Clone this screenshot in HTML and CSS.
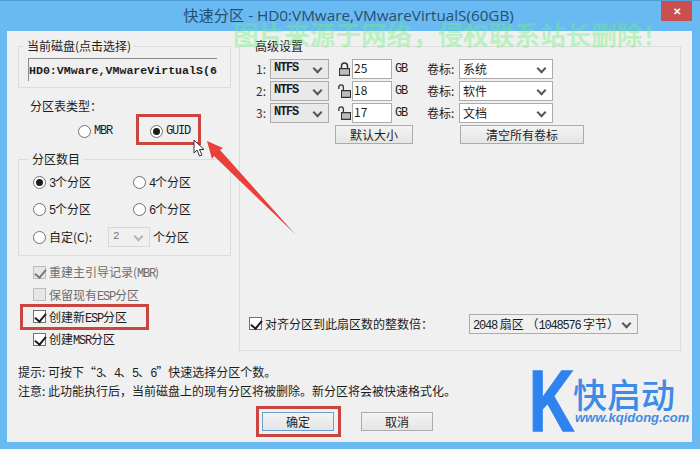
FILE: index.html
```html
<!DOCTYPE html>
<html lang="zh-CN">
<head>
    <meta charset="UTF-8">
    <meta name="viewport" content="width=device-width, initial-scale=1.0">
    <title>快速分区</title>
    <link rel="stylesheet" href="styles.css">
</head>
<body>
    <div class="window">
        <header class="titlebar">
            <h1>快速分区 - HD0:VMware,VMwareVirtualS(60GB)</h1>
            <div class="close">&#x2715;</div>
        </header>

        <main class="client">
            <div class="panels">
                <div class="left">
                    <fieldset class="group disk-group">
                        <legend>当前磁盘(点击选择)</legend>
                        <div class="disk-input">HD0:VMware,VMwareVirtualS(6</div>
                    </fieldset>

                    <p class="type-title">分区表类型：</p>
                    <div class="type-row">
                        <label class="option type-option"><i class="radio"></i><span class="mono">MBR</span></label>
                        <label class="option mark-guid"><i class="radio on"></i><span class="mono">GUID</span></label>
                    </div>

                    <fieldset class="group count-group">
                        <legend>分区数目</legend>
                        <div class="count-grid">
                            <label class="option"><i class="radio on"></i><span><span class="mono">3</span>个分区</span></label>
                            <label class="option"><i class="radio"></i><span><span class="mono">4</span>个分区</span></label>
                            <label class="option"><i class="radio"></i><span><span class="mono">5</span>个分区</span></label>
                            <label class="option"><i class="radio"></i><span><span class="mono">6</span>个分区</span></label>
                        </div>
                        <div class="custom-row">
                            <label class="option custom-option"><i class="radio"></i><span>自定(C):</span></label>
                            <div class="select disabled custom-select">2</div>
                            <span class="custom-unit">个分区</span>
                        </div>
                    </fieldset>

                    <div class="checks">
                        <label class="option muted"><i class="check on"></i><span>重建主引导记录(<span class="mono">MBR</span>)</span></label>
                        <label class="option muted"><i class="check"></i><span>保留现有<span class="mono">ESP</span>分区</span></label>
                        <label class="option mark-esp"><i class="check on"></i><span>创建新<span class="mono">ESP</span>分区</span></label>
                        <label class="option"><i class="check on"></i><span>创建<span class="mono">MSR</span>分区</span></label>
                    </div>
                </div>

                <fieldset class="group advanced">
                    <legend>高级设置</legend>
                    <div class="part-row">
                        <span class="part-num">1:</span>
                        <div class="select fs-select">NTFS</div>
                        <svg class="lock" viewBox="0 0 13 14"><use href="#lock-closed"/></svg>
                        <div class="size-input">25</div>
                        <span class="unit">GB</span>
                        <span class="vol-label">卷标:</span>
                        <div class="select vol-select">系统</div>
                    </div>
                    <div class="part-row">
                        <span class="part-num">2:</span>
                        <div class="select fs-select">NTFS</div>
                        <svg class="lock" viewBox="0 0 13 14"><use href="#lock-open"/></svg>
                        <div class="size-input">18</div>
                        <span class="unit">GB</span>
                        <span class="vol-label">卷标:</span>
                        <div class="select vol-select">软件</div>
                    </div>
                    <div class="part-row">
                        <span class="part-num">3:</span>
                        <div class="select fs-select">NTFS</div>
                        <svg class="lock" viewBox="0 0 13 14"><use href="#lock-open"/></svg>
                        <div class="size-input">17</div>
                        <span class="unit">GB</span>
                        <span class="vol-label">卷标:</span>
                        <div class="select vol-select">文档</div>
                    </div>
                    <div class="part-buttons">
                        <button class="btn default-size">默认大小</button>
                        <button class="btn clear-labels">清空所有卷标</button>
                    </div>
                    <div class="align-row">
                        <label class="option align-option"><i class="check on"></i><span>对齐分区到此扇区数的整数倍：</span></label>
                        <div class="select align-select"><span class="mono">2048</span>&nbsp;扇区&nbsp;（<span class="mono">1048576</span>&nbsp;字节）</div>
                    </div>
                </fieldset>
            </div>

            <div class="hints">
                <p>提示: 可按下“<span class="mono">3</span>、<span class="mono">4</span>、<span class="mono">5</span>、<span class="mono">6</span>”快速选择分区个数。</p>
                <p>注意: 此功能执行后，当前磁盘上的现有分区将被删除。新分区将会被快速格式化。</p>
            </div>

            <div class="actions">
                <button class="btn primary mark-ok">确定</button>
                <button class="btn">取消</button>
            </div>
        </main>

        <div class="watermark">图片来源于网络，侵权联系站长删除！</div>

        <svg class="arrow" viewBox="0 0 100 100">
            <polygon points="2,1 18,8 15,10 90,94 9,16 7,19"/>
        </svg>

        <svg class="cursor" viewBox="0 0 13 18">
            <path d="M1 1 L1 14 L4 11 L6.5 17 L9 16 L6.5 10.5 L11 10.5 Z"/>
        </svg>

        <div class="logo">
            <span class="logo-k">K</span>
            <span class="logo-name">快启动</span>
            <span class="logo-url">www.kqidong.com</span>
        </div>
    </div>

    <svg class="icon-defs" width="0" height="0">
        <symbol id="lock-closed" viewBox="0 0 13 14">
            <path d="M3.5 7V4a3 3 0 0 1 6 0v3" fill="none" stroke="#333" stroke-width="1.5"/>
            <rect x="1.5" y="6.5" width="10" height="7" fill="#9a9a9a" stroke="#333"/>
            <path d="M2 9h9M2 11h9" stroke="#ddd"/>
        </symbol>
        <symbol id="lock-open" viewBox="0 0 13 14">
            <path d="M0.8 5V3.2a2.3 2.3 0 0 1 4.6 0V7" fill="none" stroke="#333" stroke-width="1.3"/>
            <rect x="3.5" y="6.5" width="9" height="7" fill="#9a9a9a" stroke="#333"/>
            <path d="M4 9h8M4 11h8" stroke="#ddd"/>
        </symbol>
    </svg>
</body>
</html>
```

FILE: styles.css
```css
* {
    box-sizing: border-box;
    margin: 0;
    padding: 0;
}

body {
    width: 700px;
    height: 449px;
    overflow: hidden;
    font-family: "Noto Sans CJK SC", "Liberation Sans", sans-serif;
    font-size: 12px;
    line-height: 16px;
    color: #1c1c1c;
}

/* Window frame */
.window {
    position: relative;
    width: 700px;
    height: 449px;
    padding: 0 8px 7px 7px;
    background-color: #69b9f3;
    border-top: 1px solid #4f9fd8;
}

.titlebar {
    height: 30px;
    padding-bottom: 2px;
    display: flex;
    align-items: center;
    justify-content: center;
}

.titlebar h1 {
    font-family: "Open Sans", "Noto Sans CJK SC", sans-serif;
    font-size: 15.25px;
    font-weight: 400;
    color: #24506e;
    margin-left: -2px;
}

.close {
    position: absolute;
    top: 0;
    right: 8px;
    width: 31px;
    height: 20px;
    background-color: #c9504f;
    color: #fff;
    font-size: 10px;
    font-weight: bold;
    line-height: 20px;
    text-align: center;
}

.client {
    height: 411px;
    padding: 7px 11px 0;
    background-color: #f0f0f0;
}

.panels {
    display: grid;
    grid-template-columns: 213px 442px;
    column-gap: 8px;
    height: 312px;
}

/* Group boxes */
.group {
    border: 1px solid #dcdcdc;
    min-width: 0;
}

.group legend {
    margin-left: -4px;
    padding: 0 3px;
    line-height: 16px;
}

.disk-group {
    padding: 4px 13px 6px 9px;
}

.disk-input {
    height: 23px;
    overflow: hidden;
    white-space: nowrap;
    border-top: 1px solid #8a8a8a;
    border-left: 1px solid #8a8a8a;
    font-family: "Liberation Mono", monospace;
    font-size: 11.6px;
    font-weight: bold;
    line-height: 23px;
}

.type-title {
    margin-top: 10px;
    padding-left: 12px;
}

.type-row {
    display: flex;
    margin-top: 7px;
    padding-left: 60px;
}

.type-option {
    width: 72px;
}

.count-group {
    margin-top: 10px;
    padding: 5px 14px 8px;
}

.count-grid {
    display: grid;
    grid-template-columns: 100px 84px;
    row-gap: 7px;
}

.custom-row {
    display: flex;
    align-items: center;
    margin-top: 8px;
}

.custom-option {
    width: 75px;
}

.custom-select {
    width: 42px;
}

.custom-unit {
    margin-left: 3px;
}

.checks {
    margin-top: 5px;
    padding-left: 15px;
}

.checks .option {
    width: fit-content;
    height: 22.4px;
}

/* Radio, checkbox */
.option {
    position: relative;
    display: flex;
    align-items: center;
    gap: 3px;
    height: 20px;
    white-space: nowrap;
}

.muted {
    color: #6d6d6d;
}

.radio {
    position: relative;
    flex: none;
    width: 13px;
    height: 13px;
    border: 1px solid #707070;
    border-radius: 50%;
    background-color: #fff;
}

.radio.on::after {
    content: "";
    position: absolute;
    top: 2px;
    left: 2px;
    width: 7px;
    height: 7px;
    border-radius: 50%;
    background-color: #1c1c1c;
}

.check {
    position: relative;
    flex: none;
    width: 13px;
    height: 13px;
    border: 1px solid #707070;
    background-color: #fff;
}

.check.on::after {
    content: "";
    position: absolute;
    top: 0;
    left: 3px;
    width: 5px;
    height: 9px;
    border-right: 2px solid #1c1c1c;
    border-bottom: 2px solid #1c1c1c;
    transform: rotate(40deg);
}

.muted .check {
    border-color: #bcbcbc;
    background-color: #e6e6e6;
}

.muted .check.on::after {
    border-color: #777;
}

.mono {
    font-family: "Liberation Mono", monospace;
    font-size: 12px;
    letter-spacing: -1.2px;
    line-height: 1;
}

/* Select boxes */
.select {
    position: relative;
    flex: none;
    height: 20px;
    padding-left: 3px;
    border: 1px solid #ababab;
    background-color: #fff;
    line-height: 17px;
    white-space: nowrap;
}

.select::after {
    content: "";
    position: absolute;
    top: 5px;
    right: 7px;
    width: 5px;
    height: 5px;
    border-right: 2px solid #555;
    border-bottom: 2px solid #555;
    transform: rotate(45deg);
}

.select.disabled {
    background-color: #f0f0f0;
    border-color: #d9d9d9;
    color: #777;
    font-family: "Liberation Mono", monospace;
    font-size: 11px;
    padding-left: 4px;
}

.select.disabled::after {
    border-color: #b5b5b5;
}

/* Advanced settings */
.advanced {
    display: flex;
    flex-direction: column;
    padding: 4px 0 16px 16px;
}

.part-row {
    display: flex;
    align-items: center;
    height: 22px;
}

.part-num {
    width: 14px;
    color: #333;
}

.fs-select {
    width: 59px;
    background-color: #e9e9e9;
    font-family: "Liberation Mono", monospace;
    font-size: 12px;
    font-weight: bold;
    letter-spacing: -1.2px;
}

.lock {
    width: 13px;
    height: 14px;
    margin-left: 9px;
}

.size-input {
    width: 40px;
    height: 20px;
    margin-left: 1px;
    padding-left: 1px;
    border: 1px solid #ababab;
    background-color: #fff;
    line-height: 15px;
}

.unit {
    width: 35px;
    padding-left: 3px;
    font-family: "Liberation Mono", monospace;
    font-size: 12px;
    letter-spacing: -1.2px;
}

.vol-label {
    width: 32px;
}

.vol-select {
    width: 94px;
}

.part-buttons {
    display: flex;
    margin-top: 1px;
    padding-left: 79px;
}

.btn {
    width: 72px;
    height: 19px;
    border: 1px solid #acacac;
    background: linear-gradient(#f3f3f3, #e5e5e5);
    font-family: inherit;
    font-size: 12px;
    line-height: 15px;
    color: #1c1c1c;
}

.default-size {
    width: 78px;
}

.clear-labels {
    width: 124px;
    margin-left: 47px;
}

.align-row {
    display: flex;
    align-items: center;
    margin: auto 0 0 -7px;
}

.align-option {
    width: 220px;
}

.align-select {
    width: 169px;
    background-color: #f0f0f0;
}

/* Bottom text and buttons */
.hints {
    padding-top: 12px;
    line-height: 19px;
}

.actions {
    display: flex;
    gap: 27px;
    margin-top: 12px;
    padding-left: 244px;
}

.primary {
    border-color: #6c9fcb;
}

/* Marks added on the screenshot */
.mark-guid::after,
.mark-esp::after,
.mark-ok::after {
    content: "";
    position: absolute;
    border: 3px solid #cb4540;
    pointer-events: none;
}

.mark-guid::after {
    top: -7px;
    right: -11px;
    bottom: -4px;
    left: -14px;
}

.mark-esp::after {
    top: -2px;
    right: -22px;
    bottom: -2px;
    left: -13px;
}

.mark-ok {
    position: relative;
}

.mark-ok::after {
    top: -7px;
    right: -8px;
    bottom: -7px;
    left: -7px;
}

.watermark {
    position: absolute;
    top: 18px;
    left: 233px;
    font-size: 25.6px;
    font-weight: bold;
    line-height: 30px;
    white-space: nowrap;
    color: rgba(110, 240, 125, 0.42);
}

.arrow {
    position: absolute;
    top: 139px;
    left: 205px;
    width: 100px;
    height: 100px;
}

.arrow polygon {
    fill: #e9403c;
}

.cursor {
    position: absolute;
    top: 138px;
    left: 193px;
    width: 13px;
    height: 18px;
}

.cursor path {
    fill: #fff;
    stroke: #333;
    stroke-width: 1;
}

/* Logo in the corner */
.logo {
    position: absolute;
    top: 360px;
    left: 525px;
    width: 160px;
    height: 80px;
    color: #3d8be6;
}

.logo-k {
    position: absolute;
    top: 0;
    left: 4px;
    font-family: "Liberation Sans", sans-serif;
    font-size: 87px;
    font-weight: bold;
    line-height: 80px;
    color: #2f83ef;
    -webkit-text-stroke: 1.5px #2f83ef;
    transform: scaleX(0.72);
    transform-origin: left center;
}

.logo-name {
    position: absolute;
    top: 13px;
    left: 48px;
    font-size: 34px;
    font-weight: 500;
    line-height: 40px;
    white-space: nowrap;
}

.logo-url {
    position: absolute;
    top: 49px;
    left: 50px;
    font-family: "Liberation Sans", sans-serif;
    font-size: 13px;
    font-style: italic;
    font-weight: bold;
    line-height: 16px;
    white-space: nowrap;
}

.icon-defs {
    position: absolute;
}
```
